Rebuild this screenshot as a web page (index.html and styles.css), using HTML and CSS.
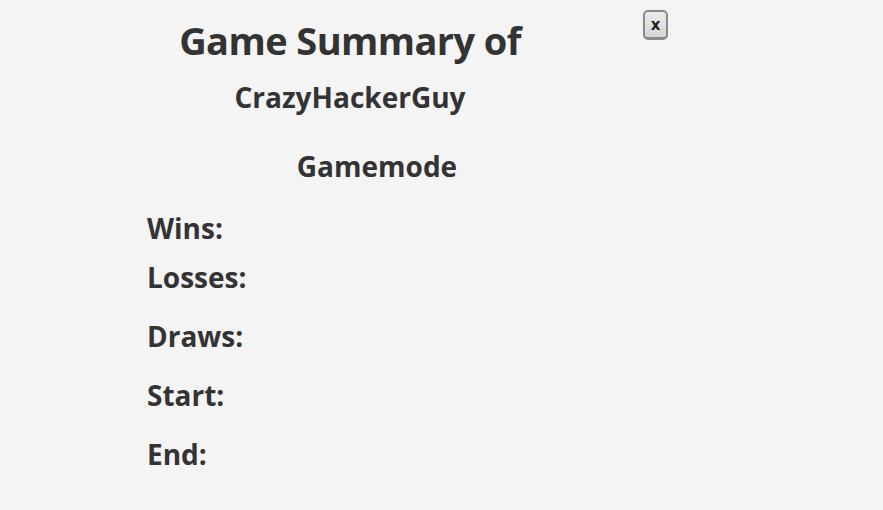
FILE: index.html
```html
<!DOCTYPE html>
<html>
<head>
<meta charset="utf-8">
<link rel="stylesheet" href="styles.css">
</head>
<body>
<div class="page">
  <div class="summary">
    <div class="header">
      <h1 class="title">Game Summary of</h1>
      <h2 class="player">CrazyHackerGuy</h2>
    </div>
    <h3 class="mode">Gamemode</h3>
    <div class="stats">
      <div class="stat stat-tight">Wins:</div>
      <div class="stat">Losses:</div>
      <div class="stat">Draws:</div>
      <div class="stat">Start:</div>
      <div class="stat">End:</div>
    </div>
  </div>
  <button class="close">x</button>
</div>
</body>
</html>
```
FILE: styles.css
```css
html, body {
  margin: 0;
  padding: 0;
  background: #f4f4f4;
}
body {
  font-family: "Open Sans", "Noto Sans", sans-serif;
  color: #333333;
  width: 883px;
  height: 510px;
  overflow: hidden;
}
.page {
  display: flex;
  align-items: flex-start;
  padding-left: 147px;
}
.summary {
  width: 460px;
  display: flex;
  flex-direction: column;
}
.header {
  width: 406px;
  text-align: center;
}
.title {
  margin: 0;
  font-size: 38px;
  font-weight: 700;
  line-height: 46px;
  padding-top: 17px;
  letter-spacing: -0.6px;
}
.player {
  margin: 0;
  font-size: 28px;
  font-weight: 700;
  line-height: 36px;
  padding-top: 16px;
}
.mode {
  margin: 0;
  text-align: center;
  font-size: 28px;
  font-weight: 700;
  line-height: 36px;
  padding-top: 33px;
}
.stats {
  display: flex;
  flex-direction: column;
  padding-top: 26px;
}
.stat {
  font-size: 28px;
  font-weight: 700;
  line-height: 36px;
  height: 59px;
}
.stat-tight {
  height: 49px;
}
.close {
  margin-left: 36px;
  margin-top: 10px;
  width: 25px;
  height: 30px;
  padding: 0;
  font-family: "DejaVu Sans", sans-serif;
  font-size: 15px;
  font-weight: 700;
  color: #222;
  background: linear-gradient(#ebebeb, #d6d6d6);
  border: 2px solid #8a8a8a;
  border-bottom-width: 3px;
  border-radius: 5px;
}
```
